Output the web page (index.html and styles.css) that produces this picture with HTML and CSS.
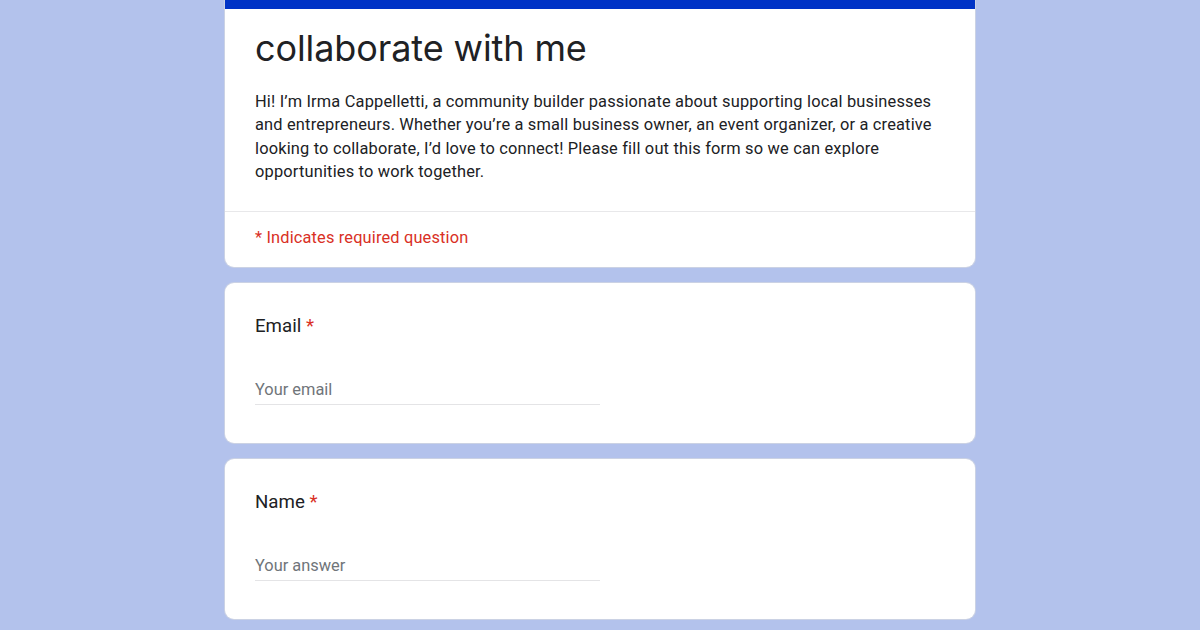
FILE: index.html
```html
<!DOCTYPE html>
<html lang="en">
<head>
<meta charset="utf-8">
<title>collaborate with me</title>
<link rel="stylesheet" href="styles.css">
</head>
<body>
<main class="form">
  <section class="card header-card">
    <div class="header-main">
      <h1 class="title">collaborate with me</h1>
      <p class="desc">Hi! I’m Irma Cappelletti, a community builder passionate about supporting local businesses and entrepreneurs. Whether you’re a small business owner, an event organizer, or a creative looking to collaborate, I’d love to connect! Please fill out this form so we can explore opportunities to work together.</p>
    </div>
    <div class="required-note">* Indicates required question</div>
  </section>
  <section class="card question">
    <div class="label">Email <span class="star">*</span></div>
    <div class="field"><span class="placeholder">Your email</span></div>
  </section>
  <section class="card question">
    <div class="label">Name <span class="star">*</span></div>
    <div class="field"><span class="placeholder">Your answer</span></div>
  </section>
</main>
</body>
</html>
```
FILE: styles.css
```css
html, body {
  margin: 0;
  padding: 0;
}
body {
  background: #b3c2ec;
  font-family: Roboto, "Liberation Sans", Arial, sans-serif;
  color: #202124;
  height: 630px;
  overflow: hidden;
}
.form {
  width: 750px;
  margin: 0 auto;
  display: flex;
  flex-direction: column;
  gap: 16px;
}
.card {
  background: #ffffff;
  border-radius: 9px;
  box-shadow: 0 0 0 1px rgba(218, 220, 224, 0.6);
}
.header-card {
  border-top: 9px solid #0033c6;
  border-radius: 0 0 9px 9px;
}
.header-main {
  padding: 16px 30px 28px;
  border-bottom: 1px solid #e8e8ea;
}
.title {
  margin: 0;
  font-family: Inter, "Open Sans", sans-serif;
  font-weight: 400;
  font-size: 36px;
  line-height: 46px;
  letter-spacing: -0.1px;
  color: #202124;
}
.desc {
  margin: 19px -12px 0 0;
  font-size: 16.4px;
  line-height: 23.3px;
  letter-spacing: 0.18px;
  color: #202124;
}
.required-note {
  padding: 14px 30px 17px;
  font-size: 16.4px;
  line-height: 24px;
  letter-spacing: 0.15px;
  color: #d93025;
}
.question {
  padding: 30px 30px 38px;
}
.label {
  font-size: 18.7px;
  line-height: 26px;
  color: #202124;
}
.star {
  color: #d93025;
}
.field {
  margin-top: 39px;
  width: 345px;
  border-bottom: 1px solid #e4e4e6;
  padding-bottom: 3px;
}
.placeholder {
  font-size: 16.4px;
  line-height: 23px;
  color: #70757a;
}
```
